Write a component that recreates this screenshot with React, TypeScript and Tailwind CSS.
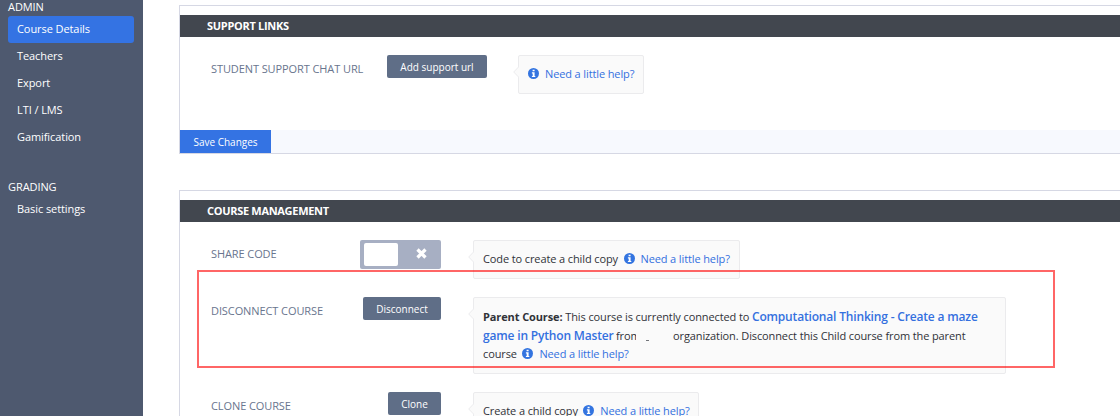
import React from "react";

const navItems = ["Course Details", "Teachers", "Export", "LTI / LMS", "Gamification"];

function InfoIcon() {
  return (
    <svg viewBox="0 0 11 11" className="mr-[6px] inline-block h-[11px] w-[11px] align-[-1px]">
      <circle cx="5.5" cy="5.5" r="5.5" fill="#3374e0" />
      <path d="M4.6 1.7h2v1.6h-2zM3.9 4.3h2.7v3.6h.7v1.2H3.9V7.9h.8V5.5h-.8z" fill="#fff" />
    </svg>
  );
}

function Help() {
  return (
    <span className="tracking-[-0.12px] whitespace-nowrap text-[#3470df]">
      <InfoIcon />
      Need a little help?
    </span>
  );
}

function Tip({ children, className = "" }: { children: React.ReactNode; className?: string }) {
  return (
    <div className={"relative shrink-0 rounded-[2px] border border-[#ebebed] bg-[#fafafa] pl-[9px] text-[11px] tracking-[-0.11px] text-[#303238] " + className}>
      <svg viewBox="0 0 6 12" className="absolute top-[10px] -left-[6px] h-3 w-[6px]">
        <path d="M6 .5 .7 6 6 11.5" fill="#fafafa" stroke="#ebebed" />
      </svg>
      {children}
    </div>
  );
}

function Button({ children, className }: { children: React.ReactNode; className: string }) {
  return (
    <button className={"h-[23px] shrink-0 rounded-[2px] bg-[#5f6e87] pt-[2px] text-center text-[10px] leading-[21px] font-medium whitespace-nowrap text-white " + className}>
      {children}
    </button>
  );
}

function CardTitle({ children }: { children: React.ReactNode }) {
  return (
    <h2 className="mt-[9px] h-[22px] bg-[#42474f] pl-[27px] text-[11px] leading-[22px] font-bold tracking-[-0.3px] text-white">{children}</h2>
  );
}

function Label({ children, className }: { children: React.ReactNode; className: string }) {
  return <div className={"shrink-0 pt-[4px] text-[11px] leading-5 tracking-[-0.09px] whitespace-nowrap text-[#69758e] " + className}>{children}</div>;
}

export default function App() {
  return (
    <div className="relative flex h-[416px] w-[1120px] overflow-hidden bg-white font-['Open_Sans',sans-serif]">
      <aside className="w-[143px] shrink-0 bg-[#4e596f] pl-2 text-[11px] tracking-[-0.08px] text-white">
        <div className="h-4 leading-[13px]">ADMIN</div>
        <nav className="w-[126px]">
          {navItems.map((item, i) => (
            <div key={item} className={"h-[27px] rounded-[3px] pl-[9px] leading-[25px] " + (i === 0 ? "bg-[#3473e3]" : "")}>
              {item}
            </div>
          ))}
        </nav>
        <div className="mt-[27px] h-[17px] leading-[17px]">GRADING</div>
        <div className="pl-[9px] leading-[27px]">Basic settings</div>
      </aside>

      <main className="min-w-0 flex-1 pt-[5px] pl-[36px]">
        <section className="h-[149px] border-y border-l border-[#d6d8e4]">
          <CardTitle>SUPPORT LINKS</CardTitle>
          <div className="flex h-[93px] items-start pt-[18px] pl-[31px]">
            <Label className="w-[176px]">STUDENT SUPPORT CHAT URL</Label>
            <Button className="w-[100px]">Add support url</Button>
            <Tip className="ml-[31px] h-[39px] w-[126px] leading-[35px]">
              <Help />
            </Tip>
          </div>
          <div className="flex h-[23px] bg-[#f7f9fe]">
            <button className="h-[23px] w-[91px] bg-[#3473e3] pt-[2px] text-[10px] leading-[21px] font-medium text-white">Save Changes</button>
          </div>
        </section>

        <section className="mt-[36px] h-[260px] border-t border-l border-[#d6d8e4]">
          <CardTitle>COURSE MANAGEMENT</CardTitle>
          <div className="flex h-[75px] items-start pt-[18px] pl-[31px]">
            <Label className="w-[149px]">SHARE CODE</Label>
            <div className="flex h-[29px] w-[81px] items-start rounded-[2px] bg-[#a7afc3] pt-[3px] pl-[4px]">
              <div className="h-[23px] w-[34px] rounded-[2px] bg-white" />
              <svg viewBox="0 0 11 11" className="mt-[5px] ml-[18px] h-[11px] w-[11px]">
                <path d="m1.5 1.5 8 8m0-8-8 8" stroke="#fff" strokeWidth="3.3" />
              </svg>
            </div>
            <Tip className="ml-[32px] h-[39px] w-[267px] leading-[35px] whitespace-nowrap">
              Code to create a child copy&nbsp; <Help />
            </Tip>
          </div>
          <div className="flex h-[95px] items-start pl-[31px]">
            <Label className="w-[152px]">DISCONNECT COURSE</Label>
            <Button className="w-[78px]">Disconnect</Button>
            <Tip className="ml-[32px] h-[77px] w-[533px] pt-[9px]">
              <div className="h-[19px] leading-[19px] whitespace-nowrap">
                <b>Parent Course:</b> This course is currently connected to{" "}
                <a className="text-[12px] font-semibold tracking-[-0.17px] text-[#3470df]">Computational Thinking - Create a maze</a>
              </div>
              <div className="flex h-[19px] leading-[19px] whitespace-nowrap">
                <a className="w-[133px] text-[12px] font-semibold tracking-[-0.17px] text-[#3470df]">game in Python Master</a>
                <span className="w-[20px] overflow-hidden">from</span>
                <span className="mt-[14px] ml-[10px] h-px w-[3px] bg-[#73757a]" />
                <span className="ml-[24px]">organization. Disconnect this Child course from the parent</span>
              </div>
              <div className="h-[18px] leading-[18px]">
                course&nbsp; <Help />
              </div>
            </Tip>
          </div>
          <div className="flex items-start pl-[31px]">
            <Label className="w-[177px]">CLONE COURSE</Label>
            <Button className="w-[53px]">Clone</Button>
            <Tip className="ml-[32px] h-[39px] w-[226px] leading-[35px] whitespace-nowrap">
              Create a child copy&nbsp; <Help />
            </Tip>
          </div>
        </section>
      </main>
      <div className="pointer-events-none absolute top-[270px] left-[197px] h-[98px] w-[858px] border-2 border-[#ff0000]/60" />
    </div>
  );
}
